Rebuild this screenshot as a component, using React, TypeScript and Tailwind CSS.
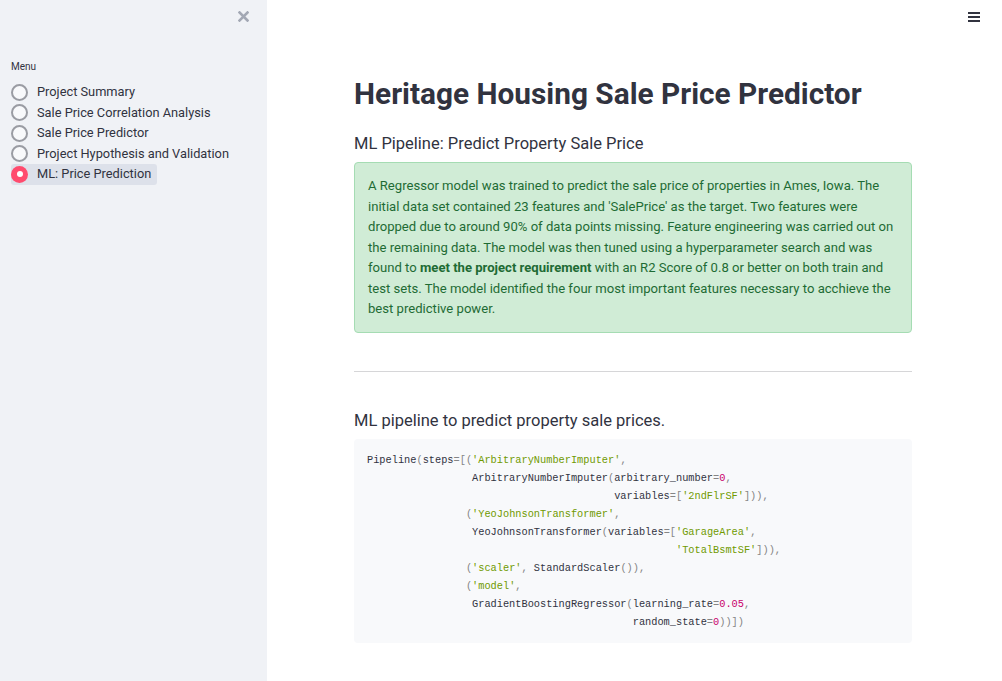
const items = [
  "Project Summary",
  "Sale Price Correlation Analysis",
  "Sale Price Predictor",
  "Project Hypothesis and Validation",
  "ML: Price Prediction",
];

const S = ({ children }: { children: React.ReactNode }) => (
  <span className="text-[#709900]">{children}</span>
);
const N = ({ children }: { children: React.ReactNode }) => (
  <span className="text-[#c9006b]">{children}</span>
);
const P = ({ children }: { children: React.ReactNode }) => (
  <span className="text-[#858585]">{children}</span>
);

function Code() {
  return (
    <pre className="font-['Liberation_Mono',monospace] text-[10.3px] leading-[18px] text-[#31333f] whitespace-pre">
      {"Pipeline"}<P>(</P>{"steps"}<P>=[(</P><S>'ArbitraryNumberImputer'</S><P>,</P>{"\n"}
      {"                 ArbitraryNumberImputer"}<P>(</P>{"arbitrary_number"}<P>=</P><N>0</N><P>,</P>{"\n"}
      {"                                        variables"}<P>=[</P><S>'2ndFlrSF'</S><P>])),</P>{"\n"}
      {"                "}<P>(</P><S>'YeoJohnsonTransformer'</S><P>,</P>{"\n"}
      {"                 YeoJohnsonTransformer"}<P>(</P>{"variables"}<P>=[</P><S>'GarageArea'</S><P>,</P>{"\n"}
      {"                                                  "}<S>'TotalBsmtSF'</S><P>])),</P>{"\n"}
      {"                "}<P>(</P><S>'scaler'</S><P>,</P>{" StandardScaler"}<P>()),</P>{"\n"}
      {"                "}<P>(</P><S>'model'</S><P>,</P>{"\n"}
      {"                 GradientBoostingRegressor"}<P>(</P>{"learning_rate"}<P>=</P><N>0.05</N><P>,</P>{"\n"}
      {"                                           random_state"}<P>=</P><N>0</N><P>))])</P>
    </pre>
  );
}

export default function App() {
  return (
    <div className="flex h-[681px] w-[1002px] overflow-hidden bg-white font-['Roboto',sans-serif] text-[#31333f]">
      <aside className="relative w-[267px] shrink-0 bg-[#f0f2f6] px-[11px] pt-[60px]">
        <svg className="absolute left-[238px] top-[11px]" width="11" height="11" viewBox="0 0 11 11">
          <path d="M1.5 1.5 L9.5 9.5 M9.5 1.5 L1.5 9.5" stroke="#a3a8b4" strokeWidth="2.6" strokeLinecap="square" />
        </svg>
        <div className="text-[10px] leading-[14px]">Menu</div>
        <div className="mt-[8px] flex flex-col">
          {items.map((it, i) => {
            const sel = i === items.length - 1;
            return (
              <div
                key={it}
                className={`flex h-[20.5px] w-fit items-center gap-[9px] rounded-[3px] pr-[6px] ${sel ? "bg-[#dde1ea]" : ""}`}
              >
                {sel ? (
                  <span className="flex h-[17px] w-[17px] items-center justify-center rounded-full bg-[#ff4b6e]">
                    <span className="h-[6px] w-[6px] rounded-full bg-white" />
                  </span>
                ) : (
                  <span className="h-[17px] w-[17px] rounded-full border-2 border-[#9a9ca3] bg-[#f8f9fb]" />
                )}
                <span className="text-[12.8px] leading-[18px]">{it}</span>
              </div>
            );
          })}
        </div>
      </aside>
      <main className="relative flex-1 pl-[87px] pt-[73px]">
        <div className="absolute right-[22px] top-[12px] flex w-[12px] flex-col gap-[2.5px]">
          <span className="h-[1.5px] bg-[#31333f]" />
          <span className="h-[1.5px] bg-[#31333f]" />
          <span className="h-[1.5px] bg-[#31333f]" />
        </div>
        <div className="w-[558px]">
          <h1 className="whitespace-nowrap text-[29.8px] font-bold leading-[42px]">Heritage Housing Sale Price Predictor</h1>
          <h3 className="mt-[18px] text-[16.5px] leading-[22px]">ML Pipeline: Predict Property Sale Price</h3>
          <div className="mt-[7px] h-[171px] whitespace-nowrap rounded-[4px] border border-[#a5dcb3] bg-[#d0ecd6] px-[13px] pt-[13px] text-[13.1px] leading-[20.5px] text-[#1e6b34]">
            A Regressor model was trained to predict the sale price of properties in Ames, Iowa. The<br />
            initial data set contained 23 features and 'SalePrice' as the target. Two features were<br />
            dropped due to around 90% of data points missing. Feature engineering was carried out on<br />
            the remaining data. The model was then tuned using a hyperparameter search and was<br />
            found to <b>meet the project requirement</b> with an R2 Score of 0.8 or better on both train and<br />
            test sets. The model identified the four most important features necessary to acchieve the<br />
            best predictive power.
          </div>
          <div className="mt-[38px] h-px bg-[#d6d6d8]" />
          <h3 className="mt-[38px] text-[16.5px] leading-[22px]">ML pipeline to predict property sale prices.</h3>
          <div className="mt-[7px] h-[204px] rounded-[4px] bg-[#f8f9fb] px-[13px] pt-[12px]">
            <Code />
          </div>
        </div>
      </main>
    </div>
  );
}
